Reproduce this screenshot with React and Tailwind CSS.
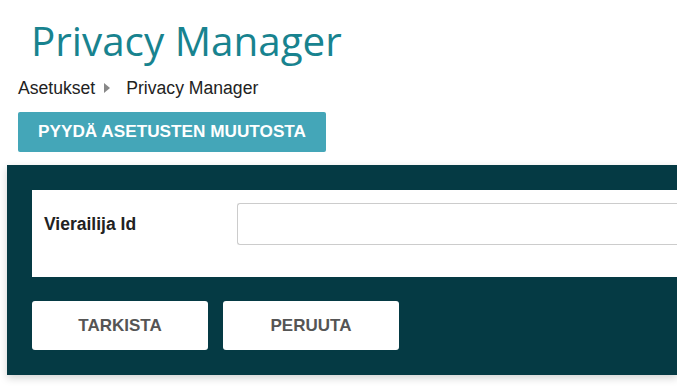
import React from 'react';

const App = () => {
  return (
    <div className="min-h-[387px] bg-white overflow-hidden" style={{ fontFamily: 'Arial, "Liberation Sans", sans-serif' }}>
      <div className="pl-[18px]">
        <h1
          className="pl-[13px] pt-[15px] text-[40.4px] leading-[52px] text-[#18838f]"
          style={{ fontFamily: '"Open Sans", sans-serif' }}
        >
          Privacy Manager
        </h1>
        <div className="mt-[11px] flex items-center text-[17.6px] leading-[20px] text-[#222]">
          <span>Asetukset</span>
          <span className="ml-[9px] mr-[16px] h-0 w-0 border-y-[5px] border-l-[6px] border-y-transparent border-l-[#888]" />
          <span>Privacy Manager</span>
        </div>
        <button className="mt-[14px] h-[40px] w-[308px] rounded-[2px] bg-[#44a6b8] text-[17.2px] font-bold text-white">
          PYYDÄ ASETUSTEN MUUTOSTA
        </button>
      </div>
      <div className="ml-[7px] mt-[13px] h-[210px] bg-[#053a44] pl-[25px] pt-[25px] shadow-[0_3px_8px_rgba(0,0,0,0.18)]">
        <div className="flex h-[87px] items-start bg-white pl-[12px] pt-[13px]">
          <label className="w-[193px] text-[17.5px] leading-[42px] font-bold text-[#222]">Vierailija Id</label>
          <input className="h-[42px] flex-1 rounded-l-[3px] border border-r-0 border-[#ccc] outline-none" />
        </div>
        <div className="mt-[24px] flex gap-[15px]">
          <button className="h-[49px] w-[176px] rounded-[3px] bg-white text-[17px] font-bold text-[#555]">TARKISTA</button>
          <button className="h-[49px] w-[176px] rounded-[3px] bg-white text-[17px] font-bold text-[#555]">PERUUTA</button>
        </div>
      </div>
    </div>
  );
};

export default App;
